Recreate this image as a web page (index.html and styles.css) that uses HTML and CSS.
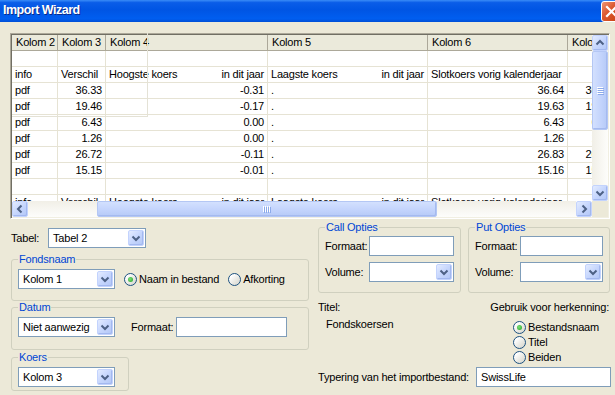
FILE: index.html
```html
<!DOCTYPE html>
<html lang="nl">
<head>
    <meta charset="UTF-8">
    <meta name="viewport" content="width=device-width, initial-scale=1.0">
    <title>Import Wizard</title>
    <link rel="stylesheet" href="styles.css">
</head>
<body>
<div class="window">
  <div class="titlebar">
    <span class="title">Import Wizard</span>
    <span class="close">
      <svg width="19" height="19" viewBox="0 0 19 19"><path d="M5 5 L14 14 M14 5 L5 14" stroke="#fff" stroke-width="2.2" stroke-linecap="square"/></svg>
    </span>
  </div>

  <div class="client">
    <div class="grid-frame">
      <div class="grid-rows">
        <div class="row head">
          <div class="c c1">Kolom 2</div>
          <div class="c c2">Kolom 3</div>
          <div class="c c3">Kolom 4</div>
          <div class="c c4">Kolom 5</div>
          <div class="c c5">Kolom 6</div>
          <div class="c c6">Kolom 7</div>
        </div>
        <div class="row">
          <div class="c c1"></div><div class="c c2"></div><div class="c c3"></div>
          <div class="c c4"></div><div class="c c5"></div><div class="c c6"></div>
        </div>
        <div class="row">
          <div class="c c1">info</div>
          <div class="c c2">Verschil</div>
          <div class="c c3 split"><span>Hoogste koers</span><span>in dit jaar</span></div>
          <div class="c c4 split"><span>Laagste koers</span><span>in dit jaar</span></div>
          <div class="c c5">Slotkoers vorig kalenderjaar</div>
          <div class="c c6"></div>
        </div>
        <div class="row">
          <div class="c c1">pdf</div><div class="c c2 r">36.33</div><div class="c c3 r">-0.31</div>
          <div class="c c4">.</div><div class="c c5 r">36.64</div><div class="c c6 r">36.64</div>
        </div>
        <div class="row">
          <div class="c c1">pdf</div><div class="c c2 r">19.46</div><div class="c c3 r">-0.17</div>
          <div class="c c4">.</div><div class="c c5 r">19.63</div><div class="c c6 r">19.63</div>
        </div>
        <div class="row">
          <div class="c c1">pdf</div><div class="c c2 r">6.43</div><div class="c c3 r">0.00</div>
          <div class="c c4">.</div><div class="c c5 r">6.43</div><div class="c c6 r">6.43</div>
        </div>
        <div class="row">
          <div class="c c1">pdf</div><div class="c c2 r">1.26</div><div class="c c3 r">0.00</div>
          <div class="c c4">.</div><div class="c c5 r">1.26</div><div class="c c6 r">1.26</div>
        </div>
        <div class="row">
          <div class="c c1">pdf</div><div class="c c2 r">26.72</div><div class="c c3 r">-0.11</div>
          <div class="c c4">.</div><div class="c c5 r">26.83</div><div class="c c6 r">26.83</div>
        </div>
        <div class="row">
          <div class="c c1">pdf</div><div class="c c2 r">15.15</div><div class="c c3 r">-0.01</div>
          <div class="c c4">.</div><div class="c c5 r">15.16</div><div class="c c6 r">15.16</div>
        </div>
        <div class="row">
          <div class="c c1"></div><div class="c c2"></div><div class="c c3"></div>
          <div class="c c4"></div><div class="c c5"></div><div class="c c6"></div>
        </div>
        <div class="row">
          <div class="c c1">info</div>
          <div class="c c2">Verschil</div>
          <div class="c c3 split"><span>Hoogste koers</span><span>in dit jaar</span></div>
          <div class="c c4 split"><span>Laagste koers</span><span>in dit jaar</span></div>
          <div class="c c5">Slotkoers vorig kalenderjaar</div>
          <div class="c c6"></div>
        </div>
      </div>

      <div class="vscroll">
        <div class="sb-btn"><svg width="14" height="14" viewBox="0 0 14 14"><polyline points="3.5,8.5 7,5 10.5,8.5" fill="none" stroke="#4d6185" stroke-width="2"/></svg></div>
        <div class="vtrack">
          <div class="vthumb">
            <svg width="8" height="8" viewBox="0 0 8 8"><path d="M1 0.5h6M1 2.5h6M1 4.5h6M1 6.5h6" stroke="#fff" stroke-width="1"/><path d="M2 1.5h6M2 3.5h6M2 5.5h6M2 7.5h6" stroke="#8caaea" stroke-width="1"/></svg>
          </div>
        </div>
        <div class="sb-btn"><svg width="14" height="14" viewBox="0 0 14 14"><polyline points="3.5,5.5 7,9 10.5,5.5" fill="none" stroke="#4d6185" stroke-width="2"/></svg></div>
      </div>

      <div class="hscroll">
        <div class="sb-btn"><svg width="14" height="14" viewBox="0 0 14 14"><polyline points="8.5,3.5 5,7 8.5,10.5" fill="none" stroke="#4d6185" stroke-width="2"/></svg></div>
        <div class="htrack">
          <div class="hthumb">
            <svg width="8" height="8" viewBox="0 0 8 8"><path d="M0.5 1v6M2.5 1v6M4.5 1v6M6.5 1v6" stroke="#fff" stroke-width="1"/><path d="M1.5 2v6M3.5 2v6M5.5 2v6M7.5 2v6" stroke="#8caaea" stroke-width="1"/></svg>
          </div>
        </div>
        <div class="sb-btn"><svg width="14" height="14" viewBox="0 0 14 14"><polyline points="5.5,3.5 9,7 5.5,10.5" fill="none" stroke="#4d6185" stroke-width="2"/></svg></div>
      </div>
      <div class="corner"></div>

      <div class="glitch"></div>
    </div>

    <div class="lower">
      <div class="lower-left">
        <div class="tabel-row">
          <span class="tabel-label">Tabel:</span>
          <div class="select w98"><span class="val">Tabel 2</span><span class="drop"><svg width="14" height="14" viewBox="0 0 14 14"><polyline points="3.5,5.5 7,9 10.5,5.5" fill="none" stroke="#4d6185" stroke-width="2"/></svg></span></div>
        </div>

        <fieldset class="group fond">
          <legend>Fondsnaam</legend>
          <div class="line">
            <div class="select w97"><span class="val">Kolom 1</span><span class="drop"><svg width="14" height="14" viewBox="0 0 14 14"><polyline points="3.5,5.5 7,9 10.5,5.5" fill="none" stroke="#4d6185" stroke-width="2"/></svg></span></div>
            <label class="radio-item first"><span class="radio checked"></span>Naam in bestand</label>
            <label class="radio-item"><span class="radio"></span>Afkorting</label>
          </div>
        </fieldset>

        <fieldset class="group datum">
          <legend>Datum</legend>
          <div class="line">
            <div class="select w97"><span class="val">Niet aanwezig</span><span class="drop"><svg width="14" height="14" viewBox="0 0 14 14"><polyline points="3.5,5.5 7,9 10.5,5.5" fill="none" stroke="#4d6185" stroke-width="2"/></svg></span></div>
            <span class="formaat-label">Formaat:</span>
            <div class="input w111"></div>
          </div>
        </fieldset>

        <fieldset class="group koers">
          <legend>Koers</legend>
          <div class="line">
            <div class="select w97"><span class="val">Kolom 3</span><span class="drop"><svg width="14" height="14" viewBox="0 0 14 14"><polyline points="3.5,5.5 7,9 10.5,5.5" fill="none" stroke="#4d6185" stroke-width="2"/></svg></span></div>
          </div>
        </fieldset>
      </div>

      <div class="lower-right">
        <div class="opties">
          <fieldset class="group call">
            <legend>Call Opties</legend>
            <div class="opt-row"><span class="opt-label">Formaat:</span><div class="input grow"></div></div>
            <div class="opt-row"><span class="opt-label">Volume:</span><div class="select grow"><span class="val"></span><span class="drop"><svg width="14" height="14" viewBox="0 0 14 14"><polyline points="3.5,5.5 7,9 10.5,5.5" fill="none" stroke="#4d6185" stroke-width="2"/></svg></span></div></div>
          </fieldset>
          <fieldset class="group put">
            <legend>Put Opties</legend>
            <div class="opt-row"><span class="opt-label">Formaat:</span><div class="input grow"></div></div>
            <div class="opt-row"><span class="opt-label">Volume:</span><div class="select grow"><span class="val"></span><span class="drop"><svg width="14" height="14" viewBox="0 0 14 14"><polyline points="3.5,5.5 7,9 10.5,5.5" fill="none" stroke="#4d6185" stroke-width="2"/></svg></span></div></div>
          </fieldset>
        </div>

        <div class="info">
          <div class="titel-col">
            <div>Titel:</div>
            <div class="titel-val">Fondskoersen</div>
          </div>
          <div class="herk-col">
            <div class="herk-label">Gebruik voor herkenning:</div>
            <div class="herk-radios">
              <label class="radio-item"><span class="radio checked"></span>Bestandsnaam</label>
              <label class="radio-item"><span class="radio"></span>Titel</label>
              <label class="radio-item"><span class="radio"></span>Beiden</label>
            </div>
          </div>
        </div>

        <div class="typering">
          <span class="typering-label">Typering van het importbestand:</span>
          <div class="input w135">SwissLife</div>
        </div>
      </div>
    </div>
  </div>
</div>
</body>
</html>
```

FILE: styles.css
```css
* {
  margin: 0;
  padding: 0;
  box-sizing: border-box;
}

body {
  width: 615px;
  height: 395px;
  overflow: hidden;
  background: #ece9d8;
  font-family: "Liberation Sans", Arial, sans-serif;
  font-size: 11px;
  letter-spacing: -0.2px;
  color: #000;
}

.window {
  width: 615px;
  height: 395px;
  overflow: hidden;
  background: #ece9d8;
}

/* title bar */
.titlebar {
  height: 22px;
  display: flex;
  justify-content: space-between;
  align-items: flex-start;
  background: linear-gradient(180deg, #3a8cf7 0%, #0a5de8 12%, #0055e4 45%, #005ef0 85%, #004fd6 100%);
}
.title {
  padding-left: 3px;
  line-height: 20px;
  color: #fff;
  font-weight: bold;
  font-size: 12.5px;
  letter-spacing: -0.5px;
  text-shadow: 1px 1px 0 #0a2a8a;
}
.close {
  width: 21px;
  height: 21px;
  margin-top: 1px;
  margin-right: -7px;
  border: 1px solid #fff;
  border-radius: 3px;
  background: linear-gradient(135deg, #ec9677 0%, #dc5a32 40%, #c8400f 100%);
  display: flex;
  align-items: center;
  justify-content: center;
}

.client {
  padding: 11px 0 0 10px;
}

/* data grid */
.grid-frame {
  position: relative;
  width: 600px;
  height: 186px;
  border: 1px solid;
  border-color: #aca899 #fff #fff #aca899;
  padding: 1px;
  box-shadow: inset 1px 1px 0 #716f64, inset -1px -1px 0 #f1efe2;
  display: grid;
  grid-template-columns: 580px 16px;
  grid-template-rows: 166px 16px;
  background: #fff;
}
.grid-rows {
  overflow: hidden;
  background: #fff;
}
.row {
  display: flex;
  height: 16px;
  line-height: 15px;
  border-bottom: 1px solid #e6e3d4;
  white-space: nowrap;
}
.row.head {
  background: #ebeadb;
  border-bottom: 1px solid #aca899;
}
.c {
  flex: none;
  padding: 0 3px;
  overflow: hidden;
  border-right: 1px solid #e6e3d4;
}
.head .c {
  border-right: 1px solid #aca899;
  padding-left: 4px;
}
.c1 { width: 46px; }
.c2 { width: 48px; }
.c3 { width: 162px; }
.c4 { width: 160px; }
.c5 { width: 140px; }
.c6 { width: 48px; }
.r { text-align: right; }
.split {
  display: flex;
  justify-content: space-between;
}

/* scrollbars */
.sb-btn {
  width: 16px;
  height: 16px;
  flex: none;
  border: 1px solid #c3d3fd;
  border-radius: 2px;
  background: linear-gradient(135deg, #e3ebff 0%, #c6d6fd 50%, #b2c7f6 100%);
  box-shadow: inset -1px -1px 0 #a3b8ef;
  display: flex;
  align-items: center;
  justify-content: center;
}
.vscroll {
  display: flex;
  flex-direction: column;
  background: #f5f4ef;
}
.vtrack {
  flex: 1;
  background: linear-gradient(90deg, #f1efe7, #fdfdfb);
}
.vthumb {
  height: 79px;
  border: 1px solid #b4c7f4;
  border-radius: 2px;
  background: linear-gradient(90deg, #d3e0fe, #c2d3fc 60%, #b6caf7);
  box-shadow: inset -1px -1px 0 #a5baef;
  display: flex;
  align-items: center;
  justify-content: center;
}
.hscroll {
  display: flex;
}
.htrack {
  flex: 1;
  padding-left: 69px;
  background: linear-gradient(180deg, #f1efe7, #fdfdfb);
}
.hthumb {
  width: 340px;
  height: 16px;
  border: 1px solid #b4c7f4;
  border-radius: 2px;
  background: linear-gradient(180deg, #d3e0fe, #c2d3fc 60%, #b6caf7);
  box-shadow: inset -1px -1px 0 #a5baef;
  display: flex;
  align-items: center;
  justify-content: center;
}
.corner {
  background: #ece9d8;
}
.glitch {
  position: absolute;
  left: 1px;
  top: -1px;
  width: 136px;
  height: 84px;
  border-right: 1px solid #e4e2d6;
  border-bottom: 1px solid #e4e2d6;
  pointer-events: none;
}

/* lower form */
.lower {
  display: flex;
  gap: 9px;
  padding-left: 1px;
}
.lower-left {
  width: 298px;
  padding-top: 9px;
}
.lower-right {
  width: 293px;
  padding-top: 2px;
}
.tabel-row {
  display: flex;
  align-items: center;
  height: 20px;
}
.tabel-label {
  width: 37px;
}

.group {
  border: 1px solid #d0d0bf;
  border-radius: 3px;
  padding: 4px 6px 11px;
  min-width: 0;
}
.group legend {
  color: #0046d5;
  line-height: 12px;
  padding: 0 1px;
}
.fond {
  margin-top: 5px;
}
.datum {
  padding-bottom: 12px;
}
.koers {
  margin-top: 1px;
  width: 118px;
  padding-bottom: 3px;
}
.line {
  display: flex;
  align-items: center;
  height: 20px;
}

.select {
  height: 20px;
  border: 1px solid #7f9db9;
  background: #fff;
  display: flex;
  align-items: center;
}
.select .val {
  flex: 1;
  padding-left: 4px;
  line-height: 18px;
  white-space: nowrap;
}
.select .drop {
  width: 16px;
  height: 16px;
  margin-right: 1px;
  border: 1px solid #c3d3fd;
  border-radius: 2px;
  background: linear-gradient(135deg, #e3ebff 0%, #c6d6fd 50%, #b2c7f6 100%);
  box-shadow: inset -1px -1px 0 #a3b8ef;
  display: flex;
  align-items: center;
  justify-content: center;
}
.input {
  height: 20px;
  border: 1px solid #7f9db9;
  background: #fff;
  padding-left: 4px;
  line-height: 18px;
}
.w98 { width: 98px; }
.w97 { width: 97px; }
.w111 { width: 111px; }
.w135 { width: 135px; }
.grow { flex: 1; }

.formaat-label {
  margin-left: 16px;
  width: 45px;
}

.radio-item {
  display: flex;
  align-items: center;
  gap: 2px;
  margin-left: 9px;
  white-space: nowrap;
}
.radio {
  position: relative;
  width: 13px;
  height: 13px;
  border: 1px solid #1c5180;
  border-radius: 50%;
  background: linear-gradient(135deg, #ffffff 20%, #e8e8e2 60%, #d4d4cc 100%);
}
.radio.checked::after {
  content: "";
  position: absolute;
  left: 3px;
  top: 3px;
  width: 5px;
  height: 5px;
  border-radius: 50%;
  background: radial-gradient(circle at 40% 40%, #7be07a, #21a121);
}

.opties {
  display: flex;
  gap: 7px;
}
.call { width: 143px; padding: 3px 6px 10px; }
.put { width: 142px; padding: 3px 6px 10px; }
.opt-row {
  display: flex;
  align-items: center;
  height: 20px;
}
.opt-row + .opt-row {
  margin-top: 6px;
}
.opt-label {
  width: 44px;
  flex: none;
}
.put .opt-label {
  width: 45px;
}

.info {
  margin-top: 8px;
  display: flex;
  justify-content: space-between;
  line-height: 13px;
}
.titel-val {
  margin-top: 4px;
  padding-left: 8px;
}
.herk-col {
  width: 121px;
}
.herk-label {
  text-align: right;
  padding-right: 2px;
  white-space: nowrap;
}
.herk-radios {
  margin-top: 6px;
  padding-left: 23px;
}
.herk-radios .radio-item {
  margin-left: 0;
  height: 15px;
}
.typering {
  margin-top: 2px;
  display: flex;
  align-items: center;
}
.typering-label {
  width: 158px;
  flex: none;
  white-space: nowrap;
}
```
